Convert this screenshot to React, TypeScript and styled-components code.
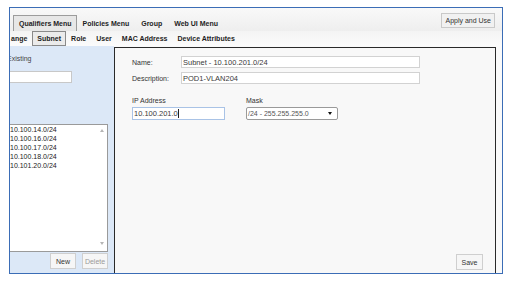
import React from "react";
import styled, { createGlobalStyle } from "styled-components";

const Global = createGlobalStyle`
  html, body { margin: 0; padding: 0; background: #ffffff; }
  body { font-family: "Liberation Sans", Arial, sans-serif; font-size: 7px; color: #222; }
  * { box-sizing: border-box; }
`;

const Frame = styled.div`
  margin: 7px 0 0 9px;
  width: 494px;
  height: 267px;
  border: 1px solid #3b6db6;
  display: flex;
  flex-direction: column;
  background: #fafafa;
  overflow: hidden;
`;

const MenuBar = styled.div`
  height: 23px;
  flex: none;
  display: flex;
  align-items: flex-end;
  padding: 0 7px 0 3px;
  background: linear-gradient(#f9f9f9, #eeeeee);
`;

const MenuItem = styled.div<{ $active?: boolean }>`
  height: 16px;
  display: flex;
  align-items: center;
  padding: 0 ${(p) => (p.$active ? "4px 0 5px" : "5px")};
  font-weight: bold;
  font-size: 7px;
  color: #1d1d1d;
  white-space: nowrap;
  border: 1px solid ${(p) => (p.$active ? "#9c9c9c" : "transparent")};
  border-bottom: none;
  background: ${(p) => (p.$active ? "#e7e7e7" : "transparent")};
`;

const Spacer = styled.div`
  flex: 1;
`;

const ApplyButton = styled.div`
  align-self: flex-start;
  margin-top: 5px;
  height: 15px;
  padding: 0 3px;
  display: flex;
  align-items: center;
  font-size: 7px;
  color: #333;
  background: #f1f1f1;
  border: 1px solid #c9c9c9;
  white-space: nowrap;
`;

const TabBar = styled.div`
  height: 15px;
  flex: none;
  display: flex;
  background: linear-gradient(#f4f4f4, #fbfbfb);
`;

const Tab = styled.div<{ $active?: boolean }>`
  height: 15px;
  display: flex;
  align-items: center;
  padding: 0 4px;
  font-weight: bold;
  font-size: 7px;
  color: #1d1d1d;
  white-space: nowrap;
  border: 1px solid ${(p) => (p.$active ? "#8a8a8a" : "transparent")};
  background: ${(p) => (p.$active ? "#ebebeb" : "transparent")};
`;

const CutTab = styled(Tab)`
  padding-left: 0;
`;

const Main = styled.div`
  flex: 1;
  display: flex;
  min-height: 0;
`;

const LeftPanel = styled.div`
  width: 104px;
  flex: none;
  background: #dce8f7;
  overflow: hidden;
  display: flex;
  flex-direction: column;
  padding: 8px 6px 4px 0;
`;

const SectionLabel = styled.div`
  margin-left: -3px;
  height: 9px;
  line-height: 9px;
  font-size: 7px;
  color: #444;
  white-space: nowrap;
`;

const SearchInput = styled.div`
  margin: 8px 0 0 -5px;
  width: 67px;
  height: 12px;
  background: #fff;
  border: 1px solid #c8c8c8;
`;

const ListBox = styled.div`
  margin: 41px 0 0 -4px;
  height: 128px;
  background: #fff;
  border: 1px solid #9a9a9a;
  display: flex;
`;

const ListItems = styled.div`
  flex: 1;
  padding: 0 0 0 3px;
`;

const ListItem = styled.div`
  height: 9px;
  line-height: 9px;
  font-size: 7px;
  color: #222;
  white-space: nowrap;
`;

const ScrollTrack = styled.div`
  width: 10px;
  display: flex;
  flex-direction: column;
  justify-content: space-between;
  align-items: center;
  padding: 4px 0 6px;
`;

const ButtonRow = styled.div`
  display: flex;
  justify-content: flex-end;
  gap: 6px;
  margin-top: 1px;
`;

const Button = styled.div<{ $disabled?: boolean }>`
  width: 26px;
  height: 16px;
  display: flex;
  align-items: center;
  justify-content: center;
  font-size: 7px;
  color: ${(p) => (p.$disabled ? "#9a9a9a" : "#333")};
  background: #f6f6f6;
  border: 1px solid #cfcfcf;
`;

const RightPanel = styled.div`
  width: 382px;
  flex: none;
  margin-top: 1px;
  border: 1px solid #2a2a2a;
  border-bottom: none;
  background: #f8f8f8;
  display: flex;
  flex-direction: column;
  padding: 8px 12px 3px 17px;
`;

const FormGrid = styled.div`
  display: grid;
  grid-template-columns: 49px 239px;
  row-gap: 4px;
  align-items: center;
`;

const Label = styled.div`
  font-size: 7px;
  color: #333;
  white-space: nowrap;
`;

const Field = styled.div<{ $focus?: boolean }>`
  height: 12px;
  display: flex;
  align-items: center;
  padding-left: 1px;
  font-size: 7.5px;
  color: #3a3a3a;
  white-space: nowrap;
  background: #fff;
  border: 1px solid ${(p) => (p.$focus ? "#a9c3e6" : "#d2d2d2")};
`;

const Caret = styled.span`
  display: inline-block;
  width: 1px;
  height: 9px;
  background: #222;
`;

const AddressRow = styled.div`
  display: flex;
  gap: 21px;
  margin-top: 12px;
`;

const AddressCol = styled.div`
  display: flex;
  flex-direction: column;
  gap: 2px;
`;

const ColLabel = styled(Label)`
  height: 9px;
  line-height: 9px;
`;

const IpField = styled(Field)`
  width: 93px;
  height: 13px;
`;

const SelectBox = styled.div`
  width: 92px;
  height: 13px;
  display: flex;
  align-items: center;
  justify-content: space-between;
  padding: 0 5px 0 1px;
  font-size: 7px;
  color: #555;
  background: #fff;
  border: 1px solid #9a9a9a;
  border-radius: 2px;
  white-space: nowrap;
`;

const SaveButton = styled(Button)`
  margin-top: auto;
  align-self: flex-end;
  width: 27px;
`;

const Arrow = ({ up }: { up?: boolean }) => (
  <svg width="4" height="3" viewBox="0 0 4 3">
    <polygon points={up ? "0,3 4,3 2,0" : "0,0 4,0 2,3"} fill="#b5b5b5" />
  </svg>
);

const items = [
  "10.100.14.0/24",
  "10.100.16.0/24",
  "10.100.17.0/24",
  "10.100.18.0/24",
  "10.101.20.0/24",
];

export default function App() {
  return (
    <>
      <Global />
      <Frame>
        <MenuBar>
          <MenuItem $active>Qualifiers Menu</MenuItem>
          <MenuItem>Policies Menu</MenuItem>
          <MenuItem>Group</MenuItem>
          <MenuItem>Web UI Menu</MenuItem>
          <Spacer />
          <ApplyButton>Apply and Use</ApplyButton>
        </MenuBar>
        <TabBar>
          <CutTab>ange</CutTab>
          <Tab $active>Subnet</Tab>
          <Tab>Role</Tab>
          <Tab>User</Tab>
          <Tab>MAC Address</Tab>
          <Tab>Device Attributes</Tab>
        </TabBar>
        <Main>
          <LeftPanel>
            <SectionLabel>Existing</SectionLabel>
            <SearchInput />
            <ListBox>
              <ListItems>
                {items.map((it) => (
                  <ListItem key={it}>{it}</ListItem>
                ))}
              </ListItems>
              <ScrollTrack>
                <Arrow up />
                <Arrow />
              </ScrollTrack>
            </ListBox>
            <ButtonRow>
              <Button>New</Button>
              <Button $disabled>Delete</Button>
            </ButtonRow>
          </LeftPanel>
          <RightPanel>
            <FormGrid>
              <Label>Name:</Label>
              <Field>Subnet - 10.100.201.0/24</Field>
              <Label>Description:</Label>
              <Field>POD1-VLAN204</Field>
            </FormGrid>
            <AddressRow>
              <AddressCol>
                <ColLabel>IP Address</ColLabel>
                <IpField $focus>
                  10.100.201.0
                  <Caret />
                </IpField>
              </AddressCol>
              <AddressCol>
                <ColLabel>Mask</ColLabel>
                <SelectBox>
                  <span>/24 - 255.255.255.0</span>
                  <svg width="4" height="3" viewBox="0 0 4 3">
                    <polygon points="0,0 4,0 2,3" fill="#111" />
                  </svg>
                </SelectBox>
              </AddressCol>
            </AddressRow>
            <SaveButton>Save</SaveButton>
          </RightPanel>
        </Main>
      </Frame>
    </>
  );
}
